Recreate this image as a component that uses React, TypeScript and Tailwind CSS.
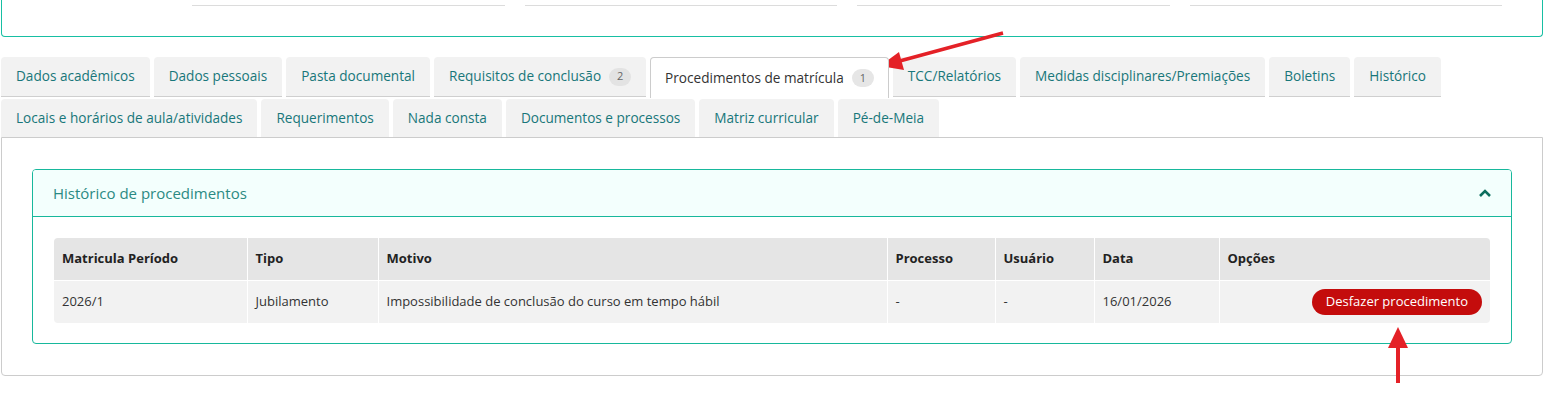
import React from "react";

const font = { fontFamily: '"Open Sans", "Noto Sans", sans-serif' };

function Tab({ label, badge, active }: { label: string; badge?: string; active?: boolean }) {
  if (active) {
    return (
      <div className="z-10 -mb-px flex h-[41px] items-center rounded-t-[4px] border border-b-0 border-[#cccccc] bg-white px-[14px] text-[13.6px] text-[#333333]">
        <span>{label}</span>
        {badge && (
          <span className="ml-[8px] flex h-[18px] min-w-[22px] items-center justify-center rounded-full bg-[#e6e6e6] px-[7px] text-[11px] text-[#666666]">
            {badge}
          </span>
        )}
      </div>
    );
  }
  return (
    <div className="flex h-[40px] items-center rounded-t-[4px] border-b border-[#cfcfcf] bg-[#f2f2f2] px-[15px] text-[13.6px] text-[#18777a]">
      <span>{label}</span>
      {badge && (
        <span className="ml-[8px] flex h-[18px] min-w-[22px] items-center justify-center rounded-full bg-[#e3e3e3] px-[7px] text-[11px] text-[#666666]">
          {badge}
        </span>
      )}
    </div>
  );
}

function Tab2({ label }: { label: string }) {
  return (
    <div className="flex h-[38px] items-center rounded-t-[4px] bg-[#f2f2f2] px-[15px] text-[13.6px] text-[#18777a]">
      {label}
    </div>
  );
}

export default function App() {
  const cols = [
    { h: "Matricula Período", w: 193, v: "2026/1" },
    { h: "Tipo", w: 131, v: "Jubilamento" },
    { h: "Motivo", w: 509, v: "Impossibilidade de conclusão do curso em tempo hábil" },
    { h: "Processo", w: 108, v: "-" },
    { h: "Usuário", w: 99, v: "-" },
    { h: "Data", w: 125, v: "16/01/2026" },
    { h: "Opções", w: 271, v: "" },
  ];
  return (
    <div className="relative h-[401px] w-[1557px] overflow-hidden bg-white" style={font}>
      {/* top box */}
      <div className="ml-[1px] h-[37px] w-[1542px] rounded-b-[4px] border-x border-b border-[#17bfa3] pt-[5px]">
        <div className="flex gap-[20px] pl-[190px]">
          <div className="h-px w-[313px] bg-[#dcdcdc]" />
          <div className="h-px w-[312px] bg-[#dcdcdc]" />
          <div className="h-px w-[313px] bg-[#dcdcdc]" />
          <div className="h-px w-[312px] bg-[#dcdcdc]" />
        </div>
      </div>

      {/* tabs */}
      <div className="ml-[1px] mt-[20px] w-[1542px]">
        <div className="flex items-end gap-[4px]">
          <Tab label="Dados acadêmicos" />
          <Tab label="Dados pessoais" />
          <Tab label="Pasta documental" />
          <Tab label="Requisitos de conclusão" badge="2" />
          <Tab label="Procedimentos de matrícula" badge="1" active />
          <Tab label="TCC/Relatórios" />
          <Tab label="Medidas disciplinares/Premiações" />
          <Tab label="Boletins" />
          <Tab label="Histórico" />
        </div>
        <div className="mt-[2px] flex gap-[4px]">
          <Tab2 label="Locais e horários de aula/atividades" />
          <Tab2 label="Requerimentos" />
          <Tab2 label="Nada consta" />
          <Tab2 label="Documentos e processos" />
          <Tab2 label="Matriz curricular" />
          <Tab2 label="Pé-de-Meia" />
        </div>

        {/* panel */}
        <div className="rounded-b-[4px] border border-[#cccccc] px-[30px] pb-[31px] pt-[31px]">
          <div className="overflow-hidden rounded-[4px] border border-[#17b89c]">
            <div className="flex h-[47px] items-center justify-between border-b border-[#17b89c] bg-[#f3fffd] pl-[20px] pr-[18px]">
              <span className="pt-px text-[15px] text-[#2b8a83]">Histórico de procedimentos</span>
              <svg width="14" height="10" viewBox="0 0 14 10" className="mr-[1px]">
                <path d="M2 8 L7 3 L12 8" fill="none" stroke="#0d6e5e" strokeWidth="2.6" />
              </svg>
            </div>
            <div className="px-[21px] pb-[20px] pt-[21px]">
              <table className="w-full table-fixed border-collapse overflow-hidden rounded-[4px] text-[13px]">
                <colgroup>
                  {cols.map((c) => (
                    <col key={c.h} style={{ width: c.w }} />
                  ))}
                </colgroup>
                <thead>
                  <tr className="h-[42px] bg-[#e5e5e5]">
                    {cols.map((c, i) => (
                      <th
                        key={c.h}
                        className={`px-[8px] text-left font-bold text-[#222222] ${i > 0 ? "border-l border-white" : ""}`}
                      >
                        {c.h}
                      </th>
                    ))}
                  </tr>
                </thead>
                <tbody>
                  <tr className="h-[43px] border-t border-white bg-[#f2f2f2]">
                    {cols.map((c, i) => (
                      <td
                        key={c.h}
                        className={`px-[8px] text-[#333333] ${i > 0 ? "border-l border-white" : ""} ${i === 6 ? "text-right" : ""}`}
                      >
                        {i === 6 ? (
                          <span className="inline-flex h-[26px] items-center rounded-full bg-[#c40c0c] px-[14px] text-[13px] text-white">
                            Desfazer procedimento
                          </span>
                        ) : (
                          c.v
                        )}
                      </td>
                    ))}
                  </tr>
                </tbody>
              </table>
            </div>
          </div>
        </div>
      </div>

      {/* annotation arrows */}
      <svg className="pointer-events-none absolute left-0 top-0" width="1557" height="401">
        <line x1="1003" y1="33" x2="896" y2="62" stroke="#e42127" strokeWidth="3.5" />
        <polygon points="880,66 899,52 904,70" fill="#e42127" />
        <line x1="1398" y1="383" x2="1398" y2="345" stroke="#e42127" strokeWidth="4" />
        <polygon points="1398,327 1388,348 1408,348" fill="#e42127" />
      </svg>
    </div>
  );
}
